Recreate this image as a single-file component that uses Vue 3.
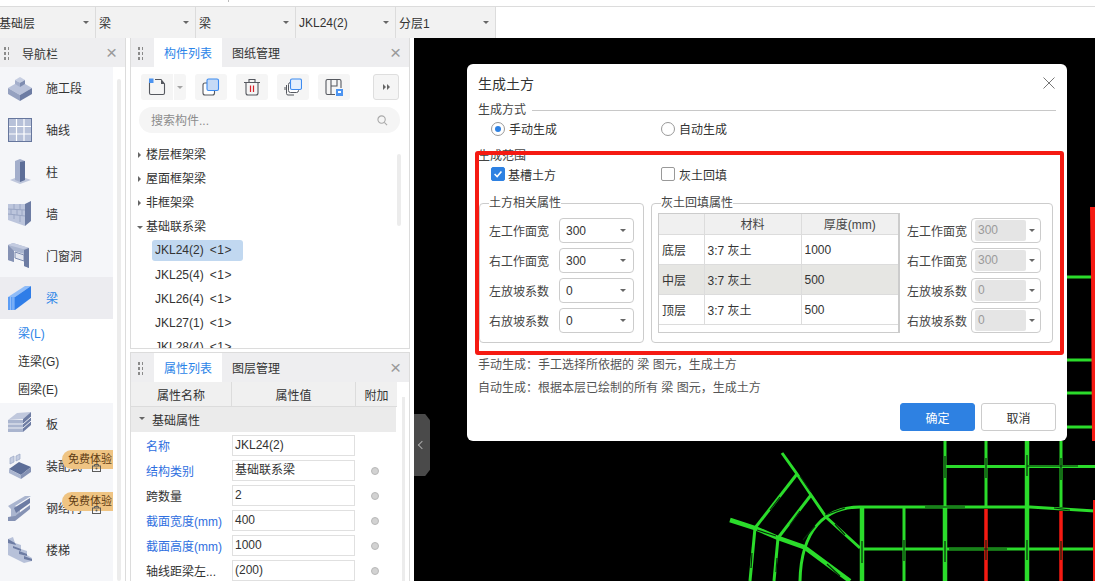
<script setup>
const crumbs = ['基础层', '梁', '梁', 'JKL24(2)', '分层1']

const navTop = [
  { name: '施工段', icon: 'block' },
  { name: '轴线', icon: 'grid' },
  { name: '柱', icon: 'column' },
  { name: '墙', icon: 'wall' },
  { name: '门窗洞', icon: 'door' },
  { name: '梁', icon: 'beam', active: true }
]
const beamKinds = [
  { name: '梁(L)', active: true },
  { name: '连梁(G)' },
  { name: '圈梁(E)' }
]
const navBottom = [
  { name: '板', icon: 'slab' },
  { name: '装配式', icon: 'precast', trial: true },
  { name: '钢结构', icon: 'steel', trial: true },
  { name: '楼梯', icon: 'stairs' }
]

const groups = ['楼层框架梁', '屋面框架梁', '非框架梁']
const beams = ['JKL24(2)', 'JKL25(4)', 'JKL26(4)', 'JKL27(1)', 'JKL28(4)']

const props = [
  { name: '名称', value: 'JKL24(2)', link: true },
  { name: '结构类别', value: '基础联系梁', link: true, dot: true },
  { name: '跨数量', value: '2', dot: true },
  { name: '截面宽度(mm)', value: '400', link: true, dot: true },
  { name: '截面高度(mm)', value: '1000', link: true, dot: true },
  { name: '轴线距梁左...', value: '(200)', dot: true }
]

const soilFields = [
  { label: '左工作面宽', value: '300' },
  { label: '右工作面宽', value: '300' },
  { label: '左放坡系数', value: '0' },
  { label: '右放坡系数', value: '0' }
]
const layers = [
  { name: '底层', material: '3:7 灰土', depth: '1000' },
  { name: '中层', material: '3:7 灰土', depth: '500', shade: true },
  { name: '顶层', material: '3:7 灰土', depth: '500' }
]

// 画布上的梁线，坐标就是页面坐标
const greenLines = [
  'M782 453 L797 474 L811 495 L826 517 L860 548',
  'M797 474 L755 528',
  'M811 495 L778 538',
  'M860 507 C825 507 801 530 800 581',
  'M862 549 H1095',
  'M945 466.5 H1095',
  'M860 507 H1030 L1095 511',
  'M986 441 V507',
  'M1061 441 V507',
  'M904 507 V581',
  'M945 441 V507',
  'M755 528 L750 581',
  'M778 538 L774 581',
  'M1067 277 H1095',
  'M1067 360 H1095',
  'M1067 393 H1095',
  'M1067 427 H1095'
]
const thickLines = [
  'M730 520 L755 528 L778 538 L804 547 L850 581',
  'M862 507 V581',
  'M945 507 V581',
  'M1027 441 V581'
]
const redLines = ['M986 509 V581', 'M1061 511 V581']
const marks = [
  'M945 456 V478', 'M986 458 V478', 'M1027 455 V476', 'M1061 458 V480', 'M1027 466 H1078',
  'M862 541 V563', 'M904 540 V561', 'M945 541 V562', 'M986 540 V560', 'M1027 540 V560', 'M1061 541 V560',
  'M949 549 H1007', 'M925 507 H965', 'M1054 508 L1070 510',
  'M800 476 L811 492', 'M845 508 L825 515', 'M815 526 L803 540', 'M845 535 L835 524',
  'M780 497 L770 510', 'M800 511 L790 525', 'M757 530 L776 536', 'M827 564 L840 576', 'M752 553 L751 568', 'M777 558 L776 572'
]
</script>

<template>
  <div class="page">
    <i class="tick"></i>
    <div class="topbar">
      <div v-for="(c, i) in crumbs" :key="i" class="crumb" :class="{ first: i === 0 }">
        <span>{{ c }}</span>
        <i class="caret"></i>
      </div>
    </div>

    <div class="main">
      <aside class="nav">
        <div class="panel-head">
          <span class="grip"></span>
          <span class="nav-title">导航栏</span>
          <span class="close">×</span>
        </div>
        <div class="nav-body">
          <div class="nav-list">
            <div v-for="n in navTop" :key="n.name" class="nav-item" :class="{ active: n.active }">
              <svg class="nav-icon" viewBox="0 0 26 26">
                <g v-if="n.icon === 'block'">
                  <path d="M1 13 L13 6 L25 13 L13 20Z" fill="#b9c2da" />
                  <path d="M1 13 V19 L13 26 V20Z" fill="#95a1c0" />
                  <path d="M25 13 V19 L13 26 V20Z" fill="#6d7ca3" />
                  <path d="M8 5 L13 2 L18 5 L13 8Z" fill="#c6cee2" />
                  <path d="M8 5 V9 L13 12 V8Z" fill="#a3aecb" />
                  <path d="M18 5 V9 L13 12 V8Z" fill="#7e8cb0" />
                </g>
                <g v-else-if="n.icon === 'grid'">
                  <rect x="1.5" y="1.5" width="23" height="23" fill="#b7c1d9" stroke="#66769d" />
                  <path d="M2 9.5 H24 M2 17 H24 M9.5 2 V24 M17 2 V24" stroke="#fff" stroke-width="1.2" />
                </g>
                <g v-else-if="n.icon === 'column'">
                  <path d="M3 21 L13 17 L24 21 L13 25Z" fill="#c0c8dd" />
                  <path d="M8 2 L13 0 L18 2 V21 L13 23 L8 21Z" fill="#a3aecb" />
                  <path d="M13 3 L18 2 V21 L13 23Z" fill="#5d6e98" />
                </g>
                <g v-else-if="n.icon === 'wall'">
                  <path d="M1 3 L18 3 L18 25 L1 19Z" fill="#bcc5dc" />
                  <path d="M18 3 L24 0 V20 L18 25Z" fill="#6d7ca3" />
                  <path d="M1 8 L18 9 M1 13 L18 15 M7 3 V8 M13 3 V9 M4 8 V13 M10 9 V14 M15 9 V15 M7 13 V18 M13 15 V21" stroke="#9aa6c4" fill="none" />
                </g>
                <g v-else-if="n.icon === 'door'">
                  <path d="M1 2 L6 0 L22 5 V25 L17 23 V11 L7 8 V19 L1 17Z" fill="#aab5cf" />
                  <path d="M1 2 L16 6 L22 5 L6 0Z" fill="#c3cbe0" />
                  <path d="M8 9 L17 12 V18 L8 15Z" fill="#e3e6ef" stroke="#7e8cb0" />
                  <path d="M22 5 V25 L17 23 V7Z" fill="#6d7ca3" />
                  <path d="M1 2 V17 L7 19 V8Z" fill="#8592b4" />
                </g>
                <g v-else-if="n.icon === 'beam'">
                  <path d="M1 12 L18 1 H24 L8 12Z" fill="#8fbcf8" />
                  <path d="M1 12 H8 V25 H1Z" fill="#5c9df5" />
                  <path d="M8 12 L24 1 V13 L8 25Z" fill="#2f7de8" />
                  <path d="M3.5 12 V25 M6 12 V25" stroke="#a9cdfa" stroke-width=".7" />
                </g>
              </svg>
              <span class="nav-name">{{ n.name }}</span>
            </div>
            <div class="kinds">
              <div v-for="k in beamKinds" :key="k.name" class="kind" :class="{ active: k.active }">{{ k.name }}</div>
            </div>
            <div v-for="n in navBottom" :key="n.name" class="nav-item">
              <svg class="nav-icon" viewBox="0 0 26 26">
                <g v-if="n.icon === 'slab'">
                  <path d="M1 9 L16 8 L24 1 L10 2Z" fill="#c0c8dd" />
                  <path d="M1 9 H16 V21 H1Z" fill="#aab5cf" />
                  <path d="M16 8 L24 1 V14 L16 21Z" fill="#6d7ca3" />
                  <path d="M1 13 H16 L24 6 M1 17 H16 L24 10" stroke="#eef0f6" fill="none" />
                </g>
                <g v-else-if="n.icon === 'precast'">
                  <path d="M2 16 L12 9 L24 14 L14 22Z" fill="#5d6e98" />
                  <path d="M2 16 V20 L14 26 V22Z" fill="#aab5cf" />
                  <path d="M24 14 V19 L14 26 V22Z" fill="#8592b4" />
                  <path d="M3 5 L7 3 V9 L3 11Z M9 3 L13 1 V6 L9 8Z" fill="#c6cee2" stroke="#9aa6c4" stroke-width=".7" />
                </g>
                <g v-else-if="n.icon === 'steel'">
                  <path d="M1 11 L18 1 H24 L8 11 L13 13 V19 L8 21 V26 H1 L4 21 V14Z" fill="#aab5cf" />
                  <path d="M7 13 L23 3 V8 L9 18Z" fill="#6d7ca3" />
                  <path d="M1 22 L8 21 L23 10 V14 L8 26 H1Z" fill="#8592b4" />
                </g>
                <g v-else-if="n.icon === 'stairs'">
                  <path d="M1 2 L6 0 L8 6 L14 8 V12 L20 14 V18 L25 21 V24 L17 26 L1 18Z" fill="#b7c1d9" />
                  <path d="M1 2 L8 6 L9 8 L1 6Z M6 9 L14 12 V14 L6 11Z M12 14 L20 17 V19 L12 17Z M17 19 L25 22 V24 L17 22Z" fill="#6d7ca3" />
                </g>
              </svg>
              <span class="nav-name">{{ n.name }}</span>
              <template v-if="n.trial">
                <span class="trial">免费体验</span>
                <svg class="lock" viewBox="0 0 9 9">
                  <path d="M2.5 3 V1.5 H6.5 V3" fill="none" stroke="#5b5b5b" />
                  <rect x="0.5" y="3" width="8" height="5.5" fill="none" stroke="#5b5b5b" />
                  <circle cx="4.5" cy="5.5" r="1" fill="#5b5b5b" />
                </svg>
              </template>
            </div>
          </div>
          <div class="nav-scroll"><i></i></div>
        </div>
      </aside>

      <section class="mid">
        <div class="card comp-card">
          <div class="panel-head">
            <span class="grip"></span>
            <span class="tab on">构件列表</span>
            <span class="tab">图纸管理</span>
            <span class="close">×</span>
          </div>
          <div class="tools">
            <div class="tool split">
              <span class="tool-main">
                <svg viewBox="0 0 18 18" width="18" height="18">
                  <path d="M1.5 3.5 V15 Q1.5 16.5 3 16.5 H15 Q16.5 16.5 16.5 15 V6 L13 1.5 H7" fill="none" stroke="#55585f" stroke-width="1.1" />
                  <path d="M13 1.5 V6 H16.5Z" fill="#55585f" />
                  <rect x="1" y="0.5" width="4.5" height="4.5" fill="#4c94f0" />
                </svg>
              </span>
              <span class="tool-caret"><i class="caret grey"></i></span>
            </div>
            <div class="tool">
              <svg viewBox="0 0 18 18" width="18" height="18">
                <rect x="1" y="5" width="11.5" height="12" rx="2" fill="#fff" stroke="#55585f" stroke-width="1.1" />
                <rect x="5" y="1" width="11.5" height="11.5" rx="1.5" fill="#c5daf6" stroke="#3d8bf0" stroke-width="1.1" />
              </svg>
            </div>
            <div class="tool">
              <svg viewBox="0 0 18 18" width="18" height="18">
                <path d="M3 5 V15 Q3 17 5 17 H13 Q15 17 15 15 V5 M1 4.5 H17 M6 4 V1.5 H12 V4" fill="none" stroke="#55585f" stroke-width="1.1" />
                <path d="M7.5 7.5 V14 M10.5 7.5 V14" stroke="#d8232a" stroke-width="1.2" />
              </svg>
            </div>
            <div class="tool">
              <svg viewBox="0 0 18 18" width="18" height="18">
                <path d="M2.5 7 V15.5 Q2.5 17 4 17 H10 M1 9 V12" fill="none" stroke="#55585f" stroke-width="1" />
                <rect x="4.5" y="4.5" width="10" height="10" rx="2" fill="#fff" stroke="#55585f" stroke-width="1" />
                <rect x="6.5" y="1" width="11" height="10.5" rx="1.5" fill="#e4effc" stroke="#3d8bf0" stroke-width="1.1" />
              </svg>
            </div>
            <div class="tool">
              <svg viewBox="0 0 18 18" width="18" height="18">
                <path d="M10 16.5 H2.5 Q1 16.5 1 15 V3 Q1 1.5 2.5 1.5 H14.5 Q16 1.5 16 3 V10 M6 2 V16 M6 8 H12 V2" fill="none" stroke="#55585f" stroke-width="1.1" />
                <rect x="11" y="11" width="7" height="7" fill="#4c94f0" />
                <rect x="13" y="13" width="3" height="2" fill="#fff" />
              </svg>
            </div>
            <div class="tool more"><i class="tri"></i><i class="tri"></i></div>
          </div>
          <div class="search">
            <span class="search-text">搜索构件...</span>
            <svg viewBox="0 0 12 12" width="11" height="11">
              <circle cx="5" cy="5" r="4" fill="none" stroke="#a9a9a9" stroke-width="1.2" />
              <path d="M8 8 L11 11" stroke="#a9a9a9" stroke-width="1.2" />
            </svg>
          </div>
          <div class="tree">
            <div v-for="g in groups" :key="g" class="tree-row">
              <i class="tri tree-tri"></i>{{ g }}
            </div>
            <div class="tree-row">
              <i class="caret tree-open"></i>基础联系梁
            </div>
            <div v-for="(b, i) in beams" :key="b" class="leaf" :class="{ picked: i === 0 }">
              <span>{{ b }}</span><span class="count">&lt;1&gt;</span>
            </div>
            <div class="tree-scroll"></div>
          </div>
        </div>

        <div class="card prop-card">
          <div class="panel-head">
            <span class="grip"></span>
            <span class="tab on">属性列表</span>
            <span class="tab">图层管理</span>
            <span class="close">×</span>
          </div>
          <div class="prop-head">
            <span class="c1">属性名称</span>
            <span class="c2">属性值</span>
            <span class="c3">附加</span>
          </div>
          <div class="prop-group"><i class="caret"></i>基础属性</div>
          <div v-for="p in props" :key="p.name" class="prop-row">
            <span class="prop-name" :class="{ link: p.link }">{{ p.name }}</span>
            <span class="prop-val">{{ p.value }}</span>
            <span class="prop-extra"><i v-if="p.dot" class="dot"></i></span>
          </div>
          <div class="prop-scroll"></div>
        </div>
      </section>

      <div class="canvas">
        <svg class="drawing" viewBox="414 38 681 543" width="681" height="543">
          <path v-for="d in greenLines" :key="d" :d="d" fill="none" stroke="#2bdc2b" stroke-width="3" />
          <path v-for="d in thickLines" :key="d" :d="d" fill="none" stroke="#2bdc2b" stroke-width="4.5" />
          <path v-for="d in redLines" :key="d" :d="d" fill="none" stroke="#f51a12" stroke-width="3.5" />
          <path d="M1090 207 H1095 V441 H1092 L1091 270Z" fill="#f51a12" />
          <path d="M1095 500 V581" stroke="#f51a12" stroke-width="4" />
          <path v-for="d in marks" :key="d" :d="d" fill="none" stroke="#06280a" stroke-width="1.2" />
        </svg>
        <div class="collapse"><i></i></div>
      </div>
    </div>

    <div class="dialog">
      <div class="dlg-title">
        <span>生成土方</span>
        <svg viewBox="0 0 12 12" width="12" height="12"><path d="M.5 .5 L11.5 11.5 M11.5 .5 L.5 11.5" stroke="#777" fill="none" /></svg>
      </div>
      <div class="dlg-section"><span>生成方式</span><i></i></div>
      <div class="choice-row radios">
        <label class="choice"><i class="radio on"></i>手动生成</label>
        <label class="choice"><i class="radio"></i>自动生成</label>
      </div>
      <div class="dlg-section scope"><span>生成范围</span></div>
      <div class="choice-row check-row">
        <label class="choice">
          <i class="check on">
            <svg viewBox="0 0 14 14" width="14" height="14"><path d="M3 7 L6 10 L11 4" fill="none" stroke="#fff" stroke-width="1.8" /></svg>
          </i>基槽土方
        </label>
        <label class="choice"><i class="check"></i>灰土回填</label>
      </div>

      <div class="groups">
        <div class="group soil">
          <span class="legend">土方相关属性</span>
          <div v-for="f in soilFields" :key="f.label" class="field">
            <span class="field-label">{{ f.label }}</span>
            <div class="select"><span>{{ f.value }}</span><i class="caret"></i></div>
          </div>
        </div>
        <div class="group lime">
          <span class="legend">灰土回填属性</span>
          <div class="layer-wrap">
            <table class="layers">
              <thead>
                <tr><th class="l1"></th><th class="l2">材料</th><th>厚度(mm)</th></tr>
              </thead>
              <tbody>
                <tr v-for="l in layers" :key="l.name" :class="{ shade: l.shade }">
                  <td>{{ l.name }}</td><td>{{ l.material }}</td><td>{{ l.depth }}</td>
                </tr>
              </tbody>
            </table>
          </div>
          <div class="lime-fields">
            <div v-for="f in soilFields" :key="f.label" class="field">
              <span class="field-label">{{ f.label }}</span>
              <div class="select off"><span>{{ f.value }}</span><i class="caret"></i></div>
            </div>
          </div>
        </div>
      </div>

      <p class="note">手动生成：手工选择所依据的 梁 图元，生成土方</p>
      <p class="note second">自动生成：根据本层已绘制的所有 梁 图元，生成土方</p>
      <div class="actions">
        <button class="btn primary">确定</button>
        <button class="btn">取消</button>
      </div>
    </div>

    <div class="red-frame"></div>
  </div>
</template>

<style scoped>
.page {
  position: relative;
  width: 1095px;
  height: 581px;
  overflow: hidden;
  background: #fff;
  font-family: "Liberation Sans", "Noto Sans CJK SC", sans-serif;
  font-size: 12px;
  color: #333;
  display: flex;
  flex-direction: column;
}
.tick {
  position: absolute;
  left: 228px;
  top: 0;
  width: 1px;
  height: 2px;
  background: #bbb;
}

.caret {
  display: inline-block;
  width: 0;
  height: 0;
  border-left: 3px solid transparent;
  border-right: 3px solid transparent;
  border-top: 3px solid #666;
}
.caret.grey {
  border-top-color: #a5a5a5;
}
.tri {
  display: inline-block;
  width: 0;
  height: 0;
  border-top: 3px solid transparent;
  border-bottom: 3px solid transparent;
  border-left: 3px solid #666;
}

/* top bar */
.topbar {
  margin-top: 6px;
  height: 32px;
  border-top: 1px solid #dcdcdc;
  display: flex;
  flex-shrink: 0;
  box-sizing: border-box;
}
.crumb {
  width: 100px;
  height: 31px;
  box-sizing: border-box;
  background: #f2f2f2;
  border-right: 1px solid #dcdcdc;
  padding: 0 6px 0 3px;
  display: flex;
  align-items: center;
  justify-content: space-between;
  font-size: 12px;
}
.crumb.first {
  width: 96px;
  padding-left: 0;
}
.crumb.first span {
  margin-left: -1px;
}

.main {
  flex: 1;
  display: flex;
  min-height: 0;
}

/* shared panel header */
.panel-head {
  position: relative;
  height: 29px;
  background: #eeeef0;
  display: flex;
  align-items: center;
  flex-shrink: 0;
}
.grip {
  width: 6px;
  height: 14px;
  margin-left: 3px;
  background-image: radial-gradient(circle, #8a8a8a 1.2px, transparent 1.3px);
  background-size: 4px 5px;
}
.close {
  position: absolute;
  right: 8px;
  top: 5px;
  font-size: 19px;
  line-height: 19px;
  color: #9a9a9a;
  font-weight: 300;
}

/* navigation */
.nav {
  width: 126px;
  flex-shrink: 0;
  border-right: 1px solid #dcdcdc;
  box-sizing: border-box;
  display: flex;
  flex-direction: column;
}
.nav-title {
  margin: 2px 0 0 13px;
  font-size: 12px;
}
.nav-body {
  flex: 1;
  display: flex;
  min-height: 0;
}
.nav-list {
  width: 113px;
  background: #f5f6f9;
}
.nav-item {
  position: relative;
  height: 42px;
  display: flex;
  align-items: center;
  padding-left: 7px;
  box-sizing: border-box;
}
.nav-item.active {
  background: #ececf0;
}
.nav-item.active .nav-name {
  color: #2b84e8;
}
.nav-name {
  margin-bottom: 2px;
}
.nav-icon {
  width: 26px;
  height: 26px;
  margin-right: 13px;
  flex-shrink: 0;
}
.kinds {
  background: #fff;
  height: 84px;
  box-sizing: border-box;
  padding-top: 1px;
}
.kind {
  height: 28px;
  line-height: 28px;
  padding-left: 18px;
}
.kind.active {
  color: #2b84e8;
}
.trial {
  position: absolute;
  left: 62px;
  top: 5px;
  width: 51px;
  height: 19px;
  line-height: 18px;
  box-sizing: border-box;
  padding-left: 6px;
  font-size: 11px;
  white-space: nowrap;
  border-radius: 10px 0 0 10px;
  background: #efc483;
  color: #5c3a12;
}
.lock {
  position: absolute;
  left: 92px;
  top: 18px;
  width: 9px;
  height: 9px;
}
.nav-scroll {
  flex: 1;
  background: #fff;
  padding: 12px 0 0 4px;
}
.nav-scroll i {
  display: block;
  width: 4px;
  height: 100%;
  background: #ececec;
  border-radius: 2px;
}

/* middle column */
.mid {
  width: 280px;
  margin-left: 4px;
  flex-shrink: 0;
  display: flex;
  flex-direction: column;
  gap: 3px;
}
.card {
  position: relative;
  box-sizing: border-box;
  border: 1px solid #dcdcdc;
  border-top: 0;
  overflow: hidden;
}
.comp-card {
  height: 311px;
}
.prop-card {
  flex: 1;
  border-top: 1px solid #dcdcdc;
  border-bottom: 0;
}
.card .grip {
  margin-left: 6px;
  margin-right: 11px;
}
.tab {
  width: 68px;
  height: 29px;
  line-height: 32px;
  text-align: center;
}
.tab.on {
  background: #fff;
  color: #2b84e8;
}
.tools {
  display: flex;
  padding: 7px 0 0 10px;
  height: 26px;
}
.tool {
  width: 32px;
  height: 26px;
  margin-right: 9px;
  background: #f5f5f5;
  border-radius: 3px;
  display: flex;
  align-items: center;
  justify-content: center;
}
.tool.split {
  width: 45px;
  background: none;
}
.tool-main {
  width: 32px;
  height: 26px;
  background: #f5f5f5;
  border-radius: 3px 0 0 3px;
  display: flex;
  align-items: center;
  justify-content: center;
}
.tool-caret {
  width: 12px;
  height: 26px;
  margin-left: 1px;
  background: #f5f5f5;
  border-radius: 0 3px 3px 0;
  display: flex;
  align-items: center;
  justify-content: center;
}
.tool.more {
  width: 26px;
  margin: 0 0 0 14px;
  box-sizing: border-box;
  border: 1px solid #dedede;
  gap: 1px;
}
.search {
  margin: 7px 9px 0 8px;
  height: 26px;
  border-radius: 13px;
  background: #f5f5f5;
  color: #8c8c8c;
  display: flex;
  align-items: center;
  justify-content: space-between;
  padding: 0 12px;
}
.search-text {
  margin-bottom: 2px;
}
.tree {
  position: relative;
  margin-top: 10px;
}
.tree-row {
  height: 24px;
  line-height: 24px;
  padding-left: 15px;
  position: relative;
}
.tree-tri {
  position: absolute;
  left: 7px;
  top: 9px;
}
.tree-open {
  position: absolute;
  left: 6px;
  top: 11px;
}
.leaf {
  height: 24px;
  margin-left: 21px;
  width: 91px;
  padding-left: 3px;
  box-sizing: border-box;
  line-height: 24px;
  border-radius: 3px;
  display: flex;
  gap: 6px;
  position: relative;
}
.leaf.picked {
  background: #c1d8f0;
  height: 21px;
  line-height: 21px;
  margin-top: 1px;
  margin-bottom: 2px;
}
.count {
  letter-spacing: 0.6px;
}
.tree-scroll {
  position: absolute;
  left: 266px;
  top: 11px;
  width: 4px;
  height: 72px;
  background: #ececec;
  border-radius: 2px;
}

/* property list */
.prop-head {
  display: flex;
  height: 25px;
  box-sizing: border-box;
  line-height: 29px;
  width: 266px;
  background: #f0f0f0;
  border-bottom: 1px solid #dcdcdc;
  text-align: center;
}
.prop-head span {
  box-sizing: border-box;
}
.c1 {
  width: 101px;
  border-right: 1px solid #dcdcdc;
}
.c2 {
  width: 124px;
  border-right: 1px solid #dcdcdc;
}
.c3 {
  width: 41px;
}
.prop-group {
  position: relative;
  height: 25px;
  line-height: 29px;
  width: 265px;
  background: #ebebeb;
  padding-left: 21px;
  box-sizing: border-box;
  margin-bottom: 1px;
}
.prop-group .caret {
  position: absolute;
  left: 8px;
  top: 10px;
}
.prop-row {
  display: flex;
  align-items: center;
  height: 25px;
}
.prop-name {
  width: 101px;
  padding-left: 15px;
  box-sizing: border-box;
  white-space: nowrap;
  margin-bottom: 1px;
}
.prop-name.link {
  color: #2f6fe0;
}
.prop-val {
  width: 123px;
  height: 21px;
  line-height: 19px;
  box-sizing: border-box;
  border: 1px solid #e0e0e0;
  padding-left: 2px;
}
.prop-extra {
  width: 39px;
  display: flex;
  justify-content: center;
}
.dot {
  width: 8px;
  height: 8px;
  border-radius: 50%;
  background: #d2d2d2;
  border: 1px solid #b8b8b8;
  box-sizing: border-box;
}
.prop-scroll {
  position: absolute;
  left: 271px;
  top: 44px;
  width: 3px;
  bottom: 0;
  background: #ececec;
}

/* canvas */
.canvas {
  position: relative;
  flex: 1;
  margin-left: 4px;
  background: #000;
  overflow: hidden;
}
.drawing {
  position: absolute;
  left: 0;
  top: 0;
}
.collapse {
  position: absolute;
  left: 0;
  top: 376px;
  width: 16px;
  height: 62px;
  background: #4a4a4a;
  clip-path: polygon(0 0, 70% 0, 100% 10%, 100% 90%, 70% 100%, 0 100%);
  display: flex;
  align-items: center;
  justify-content: center;
}
.collapse i {
  width: 5px;
  height: 5px;
  border-left: 1px solid #aaa;
  border-bottom: 1px solid #aaa;
  transform: rotate(45deg);
}

/* dialog */
.dialog {
  position: absolute;
  left: 467px;
  top: 64px;
  width: 600px;
  height: 377px;
  box-sizing: border-box;
  background: #fff;
  border-radius: 6px;
  padding: 0 11px;
}
.dlg-title {
  height: 40px;
  box-sizing: border-box;
  padding: 0 1px 2px 0;
  display: flex;
  align-items: center;
  justify-content: space-between;
  font-size: 14px;
}
.dlg-section {
  height: 12px;
  display: flex;
  align-items: center;
  color: #444;
}
.dlg-section span {
  margin-bottom: 4px;
}
.dlg-section i {
  flex: 1;
  height: 1px;
  margin-left: 6px;
  background: #c8c8c8;
}
.scope {
  margin-top: 11px;
}
.dlg-section.scope span {
  margin-bottom: 2px;
}
.choice-row {
  display: flex;
  height: 20px;
  margin-top: 3px;
  padding-left: 13px;
}
.choice-row.radios {
  margin-top: 2px;
}
.choice {
  width: 170px;
  display: flex;
  align-items: center;
}
.radio {
  width: 14px;
  height: 14px;
  box-sizing: border-box;
  border: 1px solid #999;
  border-radius: 50%;
  margin: 2px 4px 0 0;
  position: relative;
}
.radio.on::after {
  content: "";
  position: absolute;
  left: 3px;
  top: 3px;
  width: 6px;
  height: 6px;
  border-radius: 50%;
  background: #2e81e2;
}
.check {
  width: 14px;
  height: 14px;
  box-sizing: border-box;
  border: 1px solid #999;
  border-radius: 2px;
  margin-right: 3px;
  display: flex;
  align-items: center;
  justify-content: center;
}
.check.on {
  background: #2e81e2;
  border-color: #2e81e2;
}
.check-row .choice:last-child .check {
  margin-right: 4px;
}
.groups {
  display: flex;
  gap: 7px;
  margin: 19px 0 0 1px;
}
.group {
  position: relative;
  height: 140px;
  box-sizing: border-box;
  border: 1px solid #ccc;
  border-radius: 4px;
}
.soil {
  width: 165px;
  padding: 14px 0 0 9px;
}
.lime {
  width: 402px;
  padding: 9px 0 0 6px;
  display: flex;
}
.legend {
  position: absolute;
  left: 9px;
  top: -7px;
  line-height: 12px;
  background: #fff;
  color: #444;
}
.field {
  display: flex;
  align-items: center;
  height: 25px;
  margin-bottom: 5px;
}
.field-label {
  width: 70px;
  white-space: nowrap;
  color: #444;
}
.select {
  width: 75px;
  height: 25px;
  box-sizing: border-box;
  border: 1px solid #ccc;
  border-radius: 4px;
  padding: 0 7px 0 6px;
  display: flex;
  align-items: center;
  justify-content: space-between;
}
.select.off {
  width: 70px;
  padding: 1px 5px 1px 3px;
  color: #9a9a9a;
}
.select.off span {
  width: 51px;
  height: 21px;
  line-height: 21px;
  background: #e5e5e5;
  border-radius: 2px;
  padding-left: 3px;
  box-sizing: border-box;
}
.lime-fields {
  margin: 5px 0 0 7px;
}
.lime-fields .field-label {
  width: 64px;
}
.layer-wrap {
  width: 242px;
  height: 120px;
  box-sizing: border-box;
  border: 1px solid #ccc;
  border-right-width: 2px;
}
.layers {
  border-collapse: collapse;
  table-layout: fixed;
  width: 239px;
}
.layers th,
.layers td {
  border-right: 1px solid #dcdcdc;
  border-bottom: 1px solid #dcdcdc;
  padding: 0 0 0 3px;
  text-align: left;
  font-weight: 400;
  box-sizing: border-box;
}
.layers th {
  height: 20px;
  background: #f0f0f0;
  text-align: center;
  padding: 0;
  color: #444;
}
.layers td {
  height: 30px;
}
.layers td:nth-child(3) {
  padding-top: 1px;
}
.layers th:last-child,
.layers td:last-child {
  border-right: 0;
}
.l1 {
  width: 45px;
}
.l2 {
  width: 97px;
}
.shade td {
  background: #e6e6e3;
}
.note {
  margin: 12px 0 0;
  height: 20px;
  line-height: 20px;
  color: #555;
}
.note.second {
  margin-top: 3px;
}
.actions {
  display: flex;
  justify-content: flex-end;
  gap: 6px;
  margin-top: 5px;
}
.btn {
  width: 75px;
  height: 28px;
  box-sizing: border-box;
  border: 1px solid #ccc;
  border-radius: 3px;
  background: #fff;
  font: inherit;
  color: #333;
  padding: 0;
}
.btn.primary {
  background: #2e81e2;
  border-color: #2e81e2;
  color: #fff;
}

/* red annotation drawn over the screenshot */
.red-frame {
  position: absolute;
  left: 475px;
  top: 151px;
  width: 589px;
  height: 204px;
  box-sizing: border-box;
  border: 4px solid #f51a12;
  border-radius: 3px;
  pointer-events: none;
}
</style>
